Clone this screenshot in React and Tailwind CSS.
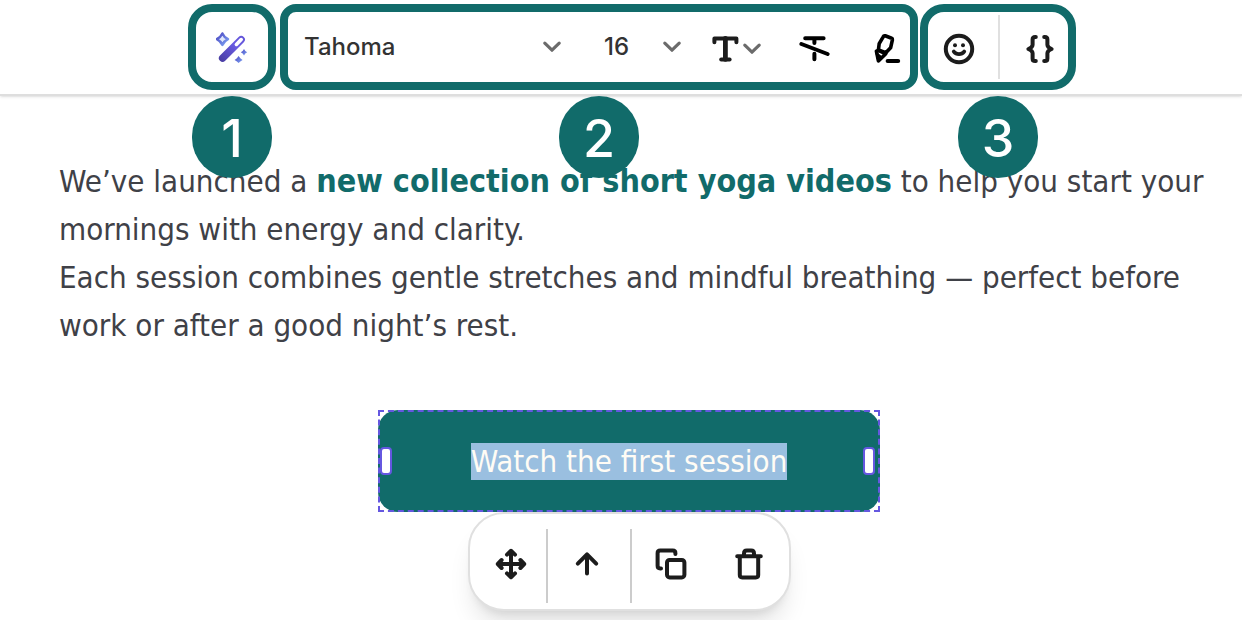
import React from "react";

const ink = "#1c1c1c";

function Chevron({ className = "" }) {
  return (
    <svg className={className} width="20" height="20" viewBox="0 0 20 20" fill="none" stroke="#6b6b6b" strokeWidth="3.2" strokeLinecap="round" strokeLinejoin="round" aria-hidden="true">
      <path d="M2.8 6.2 10 13.2l7.2-7" />
    </svg>
  );
}

function WandIcon() {
  return (
    <svg width="32" height="32" viewBox="0 0 32 32" aria-hidden="true">
      <defs>
        <linearGradient id="wand" x1="4" y1="28" x2="28" y2="4" gradientUnits="userSpaceOnUse">
          <stop offset="0" stopColor="#4a3fa5" />
          <stop offset="0.6" stopColor="#6a5be2" />
          <stop offset="1" stopColor="#6254d8" />
        </linearGradient>
        <linearGradient id="spark" x1="0" y1="0" x2="1" y2="1">
          <stop offset="0" stopColor="#4a45c0" />
          <stop offset="1" stopColor="#7fa6f5" />
        </linearGradient>
      </defs>
      <path d="M6.600 27.200 25.200 8.600" stroke="url(#wand)" strokeWidth="7.400" strokeLinecap="round" />
      <path d="M20.400 13.400 25.200 8.600" stroke="#fff" strokeWidth="3.600" strokeLinecap="round" />
      <path d="M6.400 2.400Q8.200 6.400 12 8.200Q8.200 10 6.400 14Q4.600 10 0.800 8.200Q4.600 6.400 6.400 2.400Z" fill="#dfe6fb" stroke="url(#spark)" strokeWidth="2.400" strokeLinejoin="round" />
      <path d="M28 18 29.300 19.900 31.200 21.200 29.300 22.500 28 24.400 26.700 22.500 24.800 21.200 26.700 19.900Z" fill="url(#spark)" />
      <path d="M22.600 25 24.300 27.300 26.600 29 24.300 30.400 22.600 32 20.900 30.400 18.600 29 20.900 27.300Z" fill="url(#spark)" />
    </svg>
  );
}

function TextIcon() {
  return (
    <svg width="30" height="30" viewBox="0 0 30 30" fill="none" stroke={ink} strokeLinecap="round" strokeLinejoin="round" aria-hidden="true">
      <path d="M4.400 8.200V4.400h22v3.800" strokeWidth="4" />
      <path d="M15.400 4.400v21" strokeWidth="4.800" />
      <path d="M11.200 25.600h8.400" strokeWidth="4" />
    </svg>
  );
}

function StrikeIcon() {
  return (
    <svg width="32" height="32" viewBox="0 0 32 32" fill="none" stroke="#000" strokeWidth="4" strokeLinecap="round" strokeLinejoin="round" aria-hidden="true">
      <path d="M7.200 5.200h18.400M16.400 5.200v4.800M16.400 20.800v5.400M3.400 11l26.200 10" />
    </svg>
  );
}

function HighlighterIcon() {
  return (
    <svg width="32" height="32" viewBox="0 0 32 32" fill="none" stroke="#000" strokeLinecap="round" strokeLinejoin="round" aria-hidden="true">
      <path d="M15.200 2.800 21.600 5.200Q22.600 5.600 22.400 6.800L20.600 14.800 15.800 19.800 8.400 17 9.200 10.600 13.200 3.800Q13.800 2.400 15.200 2.800Z" strokeWidth="3.600" />
      <path d="M6.400 18.200 8.400 28 15.800 20.800 8.400 17.400Z" strokeWidth="3.600" />
      <path d="M6.400 20 8.400 28 11.800 24.600Z" fill="#000" strokeWidth="2" />
      <path d="M17.600 28h10.600" strokeWidth="4" />
    </svg>
  );
}

function SmileIcon() {
  return (
    <svg width="32" height="32" viewBox="0 0 32 32" fill="none" stroke={ink} strokeLinecap="round" aria-hidden="true">
      <circle cx="16" cy="16" r="13.2" strokeWidth="4" />
      <circle cx="12" cy="12.200" r="2" fill={ink} stroke="none" />
      <circle cx="20" cy="12.200" r="2" fill={ink} stroke="none" />
      <path d="M10.800 18.600c2.600 3.400 7.800 3.400 10.400 0" strokeWidth="3.800" />
    </svg>
  );
}

function BracesIcon() {
  return (
    <svg width="32" height="32" viewBox="0 0 32 32" fill="none" stroke={ink} strokeWidth="4" strokeLinecap="round" strokeLinejoin="round" aria-hidden="true">
      <path d="M11.800 4H11.200Q8.600 4 8.600 6.600V11.800Q8.600 14.400 4.400 16Q8.600 17.600 8.600 20.200V25.400Q8.600 28 11.200 28H11.800" />
      <path d="M20.200 4H20.800Q23.400 4 23.400 6.600V11.800Q23.400 14.400 27.600 16Q23.400 17.600 23.400 20.200V25.400Q23.400 28 20.800 28H20.200" />
    </svg>
  );
}

function MoveIcon() {
  return (
    <svg width="32" height="32" viewBox="0 0 32 32" fill="none" stroke={ink} strokeWidth="4" strokeLinecap="round" strokeLinejoin="round" aria-hidden="true">
      <path d="M16 3v26M3 16h26M12 6.600 16 2.800l4 3.800M12 25.400 16 29.200l4-3.800M6.600 12 2.800 16l3.800 4M25.400 12 29.200 16l-3.800 4" />
    </svg>
  );
}

function UpIcon() {
  return (
    <svg width="32" height="32" viewBox="0 0 32 32" fill="none" stroke={ink} strokeWidth="4" strokeLinecap="round" strokeLinejoin="round" aria-hidden="true">
      <path d="M16 25.400V6.600M6.800 15.600 16 6.400l9.200 9.200" />
    </svg>
  );
}

function CopyIcon() {
  return (
    <svg width="32" height="32" viewBox="0 0 32 32" fill="none" stroke={ink} strokeWidth="4" strokeLinecap="round" strokeLinejoin="round" aria-hidden="true">
      <rect x="12" y="12" width="17.400" height="17.400" rx="2.600" />
      <path d="M6 20.400H5.200Q2.600 20.400 2.600 17.800V5.200Q2.600 2.600 5.200 2.600H17.800Q20.400 2.600 20.400 5.200V6" />
    </svg>
  );
}

function TrashIcon() {
  return (
    <svg width="32" height="32" viewBox="0 0 32 32" fill="none" stroke={ink} strokeWidth="4" strokeLinecap="round" strokeLinejoin="round" aria-hidden="true">
      <path d="M4.200 8.200h23.600M6.800 8.600V27Q6.800 29.400 9.200 29.400H22.800Q25.200 29.400 25.200 27V8.600M11 7.800V5.400Q11 2.600 13.800 2.600H18.200Q21 2.600 21 5.400V7.800" />
    </svg>
  );
}

function Group({ number, className, children }) {
  return (
    <div className={`relative flex h-[86px] items-center border-8 border-[#116b6a] bg-white ${className}`}>
      {children}
      <span className="absolute top-[84px] left-1/2 z-10 flex h-[82px] w-20 -translate-x-1/2 items-center justify-center rounded-full bg-[#116b6a] pt-1 text-[52px] leading-none font-medium text-white">
        {number}
      </span>
    </div>
  );
}

function PickList({ label, value, options, className }) {
  return (
    <div className={`relative flex items-center ${className}`}>
      <select aria-label={label} defaultValue={value} className="h-10 w-full appearance-none bg-transparent text-2xl font-medium text-[#333] outline-none">
        {options.map((option) => (
          <option key={option}>{option}</option>
        ))}
      </select>
      <Chevron className="pointer-events-none absolute right-0" />
    </div>
  );
}

function Handle() {
  return <span className="h-7 w-3 rounded border-2 border-[#6557e0] bg-white" />;
}

export default function App() {
  return (
    <div className="min-h-screen overflow-hidden bg-white font-[Inter,sans-serif]">
      <header className="flex justify-center border-b-2 border-[#dedede] pt-1 pb-1 pl-[22px] shadow-sm">
        <Group number="1" className="mr-1 w-[88px] justify-center rounded-3xl">
          <button type="button" aria-label="AI assistant"><WandIcon /></button>
        </Group>
        <Group number="2" className="mr-0.5 w-[638px] rounded-2xl pl-4">
          <PickList label="Font" value="Tahoma" options={["Arial", "Tahoma", "Verdana"]} className="mr-[42px] w-[258px]" />
          <PickList label="Font size" value="16" options={["14", "16", "18"]} className="mr-7 w-[78px]" />
          <button type="button" aria-label="Text style" className="mr-9 flex items-center gap-0.5 pt-1">
            <TextIcon />
            <Chevron />
          </button>
          <button type="button" aria-label="Strikethrough" className="mr-10 pt-1"><StrikeIcon /></button>
          <button type="button" aria-label="Highlight" className="pt-1"><HighlighterIcon /></button>
        </Group>
        <Group number="3" className="w-[156px] rounded-3xl">
          <button type="button" aria-label="Insert emoji" className="flex w-[70px] justify-center pt-1 pr-2"><SmileIcon /></button>
          <span className="h-16 w-0.5 bg-[#e0e0e0]" />
          <button type="button" aria-label="Merge tags" className="flex flex-1 justify-center pt-1 pl-3"><BracesIcon /></button>
        </Group>
      </header>

      <main className="font-['DejaVu_Sans_Condensed','DejaVu_Sans',sans-serif] text-[31px]">
        <p className="pt-[61px] pr-8 pl-[59px] leading-[48px] text-[#3f4147]">
          We’ve launched a <strong className="text-[32px] text-[#116b6a]">new collection of short yoga videos</strong> to help you start your mornings with energy and clarity.
          <br />
          Each session combines gentle stretches and mindful breathing — perfect before work or after a good night’s rest.
        </p>

        <div className="mt-[61px] flex flex-col items-center pl-4">
          <div className="relative w-[502px]">
            <a href="#session" className="flex h-[102px] items-center justify-center rounded-[20px] bg-[#116b6a] leading-[37px] text-[#fffcf5]">
              <span className="bg-[#9abfe0]">Watch the first session</span>
            </a>
            <div className="pointer-events-none absolute inset-0 flex items-center justify-between border-2 border-dashed border-[#6557e0] pr-[3px]">
              <Handle />
              <Handle />
            </div>
          </div>
          <div role="toolbar" aria-label="Block actions" className="flex h-[99px] w-[323px] items-center rounded-[36px] border-2 border-[#e0e0e0] bg-white pt-1 shadow-xl">
            <button type="button" aria-label="Move" className="flex w-[76px] justify-center pl-1.5"><MoveIcon /></button>
            <span className="mt-1 h-[74px] w-0.5 bg-[#ccc]" />
            <button type="button" aria-label="Move up" className="flex w-[82px] justify-center pr-1"><UpIcon /></button>
            <span className="mt-1 h-[74px] w-0.5 bg-[#ccc]" />
            <button type="button" aria-label="Duplicate" className="flex w-[79px] justify-center"><CopyIcon /></button>
            <button type="button" aria-label="Delete" className="flex w-[77px] justify-center"><TrashIcon /></button>
          </div>
        </div>
      </main>
    </div>
  );
}
